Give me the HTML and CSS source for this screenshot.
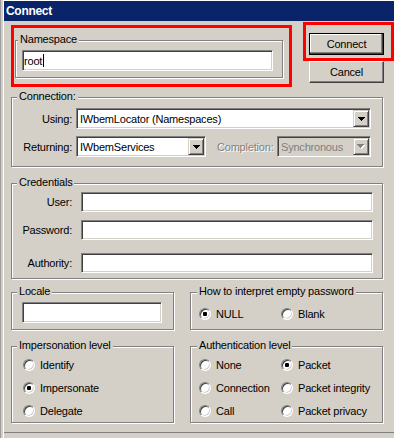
FILE: index.html
```html
<!DOCTYPE html>
<html>
<head>
<meta charset="utf-8">
<link rel="stylesheet" href="styles.css">
</head>
<body>
<div class="window">
  <div class="titlebar">Connect</div>
  <div class="client">
    <div class="row1">
      <div class="hl hl-ns">
        <div class="group g-ns">
          <div class="gtitle">Namespace</div>
          <div class="edit ns-edit"><span>root</span><span class="caret"></span></div>
        </div>
      </div>
      <div class="btncol">
        <div class="hl hl-btn"><button class="btn btn-default">Connect</button></div>
        <button class="btn btn-cancel">Cancel</button>
      </div>
    </div>

    <div class="group g-wide g-conn">
      <div class="gtitle">Connection:</div>
      <div class="frow r-using">
        <div class="lbl">Using:</div>
        <div class="combo c-using"><span class="ctext">IWbemLocator (Namespaces)</span><span class="dd"><svg width="7" height="4" viewBox="0 0 7 4"><path d="M0 0h7v1H0zM1 1h5v1H1zM2 2h3v1H2zM3 3h1v1H3z" fill="#000"/></svg></span></div>
      </div>
      <div class="frow r-ret">
        <div class="lbl">Returning:</div>
        <div class="combo c-ret"><span class="ctext">IWbemServices</span><span class="dd"><svg width="7" height="4" viewBox="0 0 7 4"><path d="M0 0h7v1H0zM1 1h5v1H1zM2 2h3v1H2zM3 3h1v1H3z" fill="#000"/></svg></span></div>
        <div class="lbl-dis">Completion:</div>
        <div class="combo combo-dis c-comp"><span class="ctext">Synchronous</span><span class="dd"><svg width="8" height="5" viewBox="0 0 8 5"><path d="M1 1h7v1H1zM2 2h5v1H2zM3 3h3v1H3zM4 4h1v1H4z" fill="#fff"/><path d="M0 0h7v1H0zM1 1h5v1H1zM2 2h3v1H2zM3 3h1v1H3z" fill="#808080"/></svg></span></div>
      </div>
    </div>

    <div class="group g-wide g-cred">
      <div class="gtitle">Credentials</div>
      <div class="frow r-user">
        <div class="lbl">User:</div>
        <div class="edit cred-edit"></div>
      </div>
      <div class="frow r-pass">
        <div class="lbl">Password:</div>
        <div class="edit cred-edit"></div>
      </div>
      <div class="frow r-auth">
        <div class="lbl">Authority:</div>
        <div class="edit cred-edit"></div>
      </div>
    </div>

    <div class="row2">
      <div class="group g-left g-locale">
        <div class="gtitle">Locale</div>
        <div class="edit locale-edit"></div>
      </div>
      <div class="group g-right g-pw">
        <div class="gtitle">How to interpret empty password</div>
        <div class="pwrow">
          <div class="ritem w82"><span class="radio on"></span><span class="rtext">NULL</span></div>
          <div class="ritem"><span class="radio"></span><span class="rtext">Blank</span></div>
        </div>
      </div>
    </div>

    <div class="row3">
      <div class="group g-left g-imp">
        <div class="gtitle">Impersonation level</div>
        <div class="implist">
          <div class="ritem"><span class="radio"></span><span class="rtext">Identify</span></div>
          <div class="ritem"><span class="radio on"></span><span class="rtext">Impersonate</span></div>
          <div class="ritem"><span class="radio"></span><span class="rtext">Delegate</span></div>
        </div>
      </div>
      <div class="group g-right g-authn">
        <div class="gtitle">Authentication level</div>
        <div class="authgrid">
          <div class="ritem"><span class="radio"></span><span class="rtext">None</span></div>
          <div class="ritem"><span class="radio on"></span><span class="rtext">Packet</span></div>
          <div class="ritem"><span class="radio"></span><span class="rtext">Connection</span></div>
          <div class="ritem"><span class="radio"></span><span class="rtext">Packet integrity</span></div>
          <div class="ritem"><span class="radio"></span><span class="rtext">Call</span></div>
          <div class="ritem"><span class="radio"></span><span class="rtext">Packet privacy</span></div>
        </div>
      </div>
    </div>
    <div class="bottomline"></div>
  </div>
</div>
</body>
</html>
```
FILE: styles.css
```css
* { box-sizing: border-box; }
html, body { margin: 0; padding: 0; }
body {
  width: 394px;
  height: 438px;
  overflow: hidden;
  background: #d4d0c8;
  font-family: "Liberation Sans", Arial, sans-serif;
  font-size: 11px;
  letter-spacing: -0.2px;
  color: #000;
}
.window {
  width: 394px;
  height: 438px;
  background: #d4d0c8;
  padding-left: 4px;
  padding-top: 1px;
  box-shadow: inset 1px 0 #9c9c9c, inset 3px 0 #d4d0c8, inset 4px 0 #fff, inset 0 1px #fff;
  overflow: hidden;
}
.titlebar {
  height: 20px;
  background: #0a246a;
  color: #fff;
  font-weight: bold;
  font-size: 12px;
  letter-spacing: -0.3px;
  line-height: 20px;
  padding-left: 2px;
}
.row1 { display: flex; align-items: flex-start; }
.hl { border: 3px solid #f00; }
.hl-ns { width: 281px; height: 62px; margin: 4px 0 0 7px; padding: 12px 0 0 1px; }
.btncol { margin: 1px 0 0 11px; display: flex; flex-direction: column; }
.hl-btn { width: 91px; height: 39px; padding: 8px 7px 3px 3px; }

.btn {
  width: 75px;
  height: 22px;
  padding: 0;
  background: #d4d0c8;
  font: inherit;
  letter-spacing: inherit;
  color: #000;
  border: 1px solid;
  border-color: #fff #404040 #404040 #fff;
  box-shadow: inset -1px -1px #808080;
  display: flex;
  align-items: center;
  justify-content: center;
}
.btn-default {
  border-color: #000;
  box-shadow: inset -1px -1px #404040, inset -2px -2px #808080, inset 1px 1px #fff;
}
.btn-cancel { margin-left: 6px; }

.group {
  border: 1px solid #808080;
  box-shadow: 1px 1px #fff, inset 1px 1px #fff;
}
.gtitle {
  width: fit-content;
  margin-top: -8px;
  margin-left: 5px;
  padding: 0 2px;
  background: #d4d0c8;
  line-height: 13px;
  white-space: nowrap;
}
.g-ns { width: 268px; height: 38px; }
.g-ns .gtitle { margin-left: 2px; }

.edit {
  background: #fff;
  border: 1px solid;
  border-color: #808080 #fff #fff #808080;
  box-shadow: inset 1px 1px #404040, inset -1px -1px #d4d0c8;
  display: flex;
  align-items: center;
  padding-left: 1px;
}
.ns-edit { width: 251px; height: 21px; margin: 4px 0 0 6px; }
.caret { width: 1px; height: 13px; background: #000; margin-left: 1px; }

.g-wide { width: 372px; margin-left: 7px; }
.g-conn { height: 70px; margin-top: 10px; }
.frow { display: flex; align-items: center; }
.lbl { width: 60px; text-align: right; white-space: nowrap; }
.r-using { margin-top: 5px; }
.r-ret { margin-top: 7px; }

.combo {
  height: 21px;
  background: #fff;
  border: 1px solid;
  border-color: #808080 #fff #fff #808080;
  box-shadow: inset 1px 1px #404040, inset -1px -1px #d4d0c8;
  padding: 1px;
  display: flex;
  align-items: stretch;
  margin-left: 4px;
}
.ctext { flex: 1; padding-left: 2px; display: flex; align-items: center; white-space: nowrap; overflow: hidden; }
.dd {
  width: 16px;
  background: #d4d0c8;
  border: 1px solid;
  border-color: #d4d0c8 #404040 #404040 #d4d0c8;
  box-shadow: inset 1px 1px #fff, inset -1px -1px #808080;
  display: flex;
  align-items: center;
  justify-content: center;
}
.dd svg { display: block; }
.c-using { width: 295px; }
.c-ret { width: 130px; }
.lbl-dis {
  width: 60px;
  margin-left: 11px;
  color: #808080;
  text-shadow: 1px 1px 0 #fff;
  white-space: nowrap;
}
.combo-dis { background: #d4d0c8; color: #808080; margin-left: 0; }
.c-comp { width: 94px; }

.g-cred { height: 96px; margin-top: 16px; }
.cred-edit { width: 292px; height: 20px; margin-left: 9px; }
.r-user { margin-top: 3px; }
.r-pass { margin-top: 8px; }
.r-auth { margin-top: 13px; }

.row2 { display: flex; margin-top: 13px; }
.row3 { display: flex; margin-top: 16px; }
.g-left { width: 163px; margin-left: 7px; }
.g-right { width: 193px; margin-left: 16px; }
.g-locale, .g-pw { height: 38px; }
.locale-edit { width: 140px; height: 21px; margin: 4px 0 0 10px; }
.g-pw .gtitle { margin-left: 6px; }
.pwrow { display: flex; margin: 9px 0 0 8px; }
.w82 { width: 82px; }

.ritem { display: flex; align-items: center; height: 13px; white-space: nowrap; }
.radio {
  width: 12px;
  height: 12px;
  flex: none;
  border-radius: 50%;
  background: #fff;
  border: 1px solid;
  border-color: #808080 #fff #fff #808080;
  box-shadow: inset 1px 1px #404040, inset -1px -1px #d4d0c8;
  display: flex;
  align-items: center;
  justify-content: center;
}
.radio.on::after {
  content: "";
  width: 4px;
  height: 4px;
  border-radius: 1px;
  background: #000;
}
.rtext { margin-left: 5px; }

.g-imp, .g-authn { height: 77px; }
.g-authn .gtitle { margin-left: 6px; }
.implist { display: flex; flex-direction: column; gap: 10px; margin: 6px 0 0 11px; }
.authgrid { display: grid; grid-template-columns: 82px auto; row-gap: 10px; margin: 6px 0 0 8px; }

.bottomline { margin-top: 9px; border-top: 1px solid #808080; }
```
